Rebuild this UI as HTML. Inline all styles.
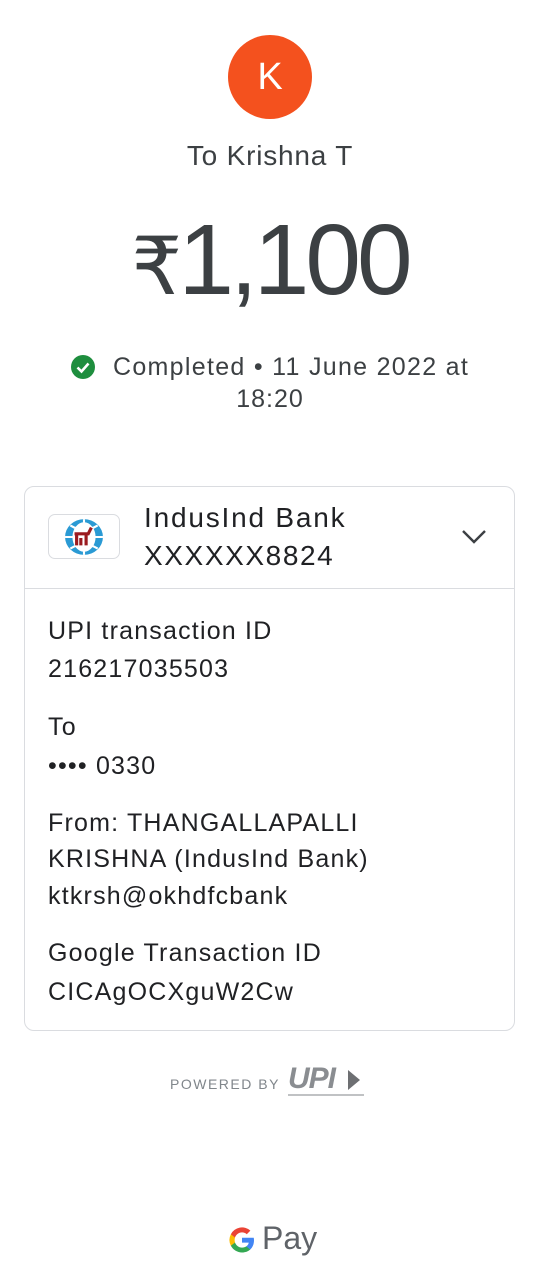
<!DOCTYPE html>
<html><head><meta charset="utf-8"><style>
*{margin:0;padding:0;box-sizing:border-box}
body{width:540px;height:1282px;background:#fff;font-family:"Liberation Sans",sans-serif;color:#202124;position:relative;overflow:hidden}
.a{position:absolute}
.t{font-size:25px;line-height:36px;letter-spacing:1.2px}
</style></head><body>
<div class="a" style="left:228px;top:35px;width:84px;height:84px;border-radius:50%;background:#f4511e;color:#fff;font-size:38px;text-align:center;line-height:84px">K</div>
<div class="a" style="left:0;width:540px;top:140px;text-align:center;font-size:28px;color:#3c4043;letter-spacing:0.8px">To Krishna T</div>
<div class="a" style="left:0;width:540px;top:200px;text-align:center;font-size:100px;color:#3c4043;line-height:120px;letter-spacing:-4px"><span style="font-size:80px">₹</span>1,100</div>
<svg class="a" style="left:70px;top:354px" width="26" height="26" viewBox="0 0 26 26"><circle cx="13" cy="13" r="12" fill="#1e8e3e"/><path d="M7.5 13.5l4 4 7-8" stroke="#fff" stroke-width="2.6" fill="none"/></svg>
<div class="a" style="left:113px;top:352px;font-size:25px;color:#3c4043;line-height:30px;letter-spacing:1.3px">Completed • 11 June 2022 at</div>
<div class="a" style="left:0;width:540px;top:384px;text-align:center;font-size:25px;color:#3c4043;line-height:30px;letter-spacing:1px">18:20</div>
<div class="a" style="left:24px;top:486px;width:491px;height:545px;border:1px solid #dadce0;border-radius:10px"></div>
<div class="a" style="left:24px;top:588px;width:491px;height:1px;background:#dadce0"></div>
<div class="a" style="left:48px;top:514px;width:72px;height:45px;border:1px solid #dadce0;border-radius:7px"></div>
<svg class="a" style="left:62px;top:517px" width="44" height="40" viewBox="0 0 40 38"><ellipse cx="20" cy="19" rx="18" ry="17" fill="#2a9ad4"/><path d="M2 19h36M20 2v34M7 8q13 8 26 0M7 30q13-8 26 0" stroke="#fff" stroke-width="2" fill="none"/><ellipse cx="20" cy="19" rx="11" ry="14" fill="#fff"/><path d="M11 16h13l3-6M13 16v11M22 16v11M17 20v7" stroke="#9b1b20" stroke-width="3" fill="none"/></svg>
<div class="a" style="left:144px;top:500px;font-size:28px;line-height:36px;letter-spacing:1.8px">IndusInd Bank</div>
<div class="a" style="left:144px;top:538px;font-size:28px;line-height:36px;letter-spacing:1.6px">XXXXXX8824</div>
<svg class="a" style="left:461px;top:528px" width="26" height="18"><path d="M2 3l11 11 11-11" stroke="#3c4043" stroke-width="2.4" fill="none"/></svg>
<div class="a t" style="left:48px;top:613px">UPI transaction ID</div>
<div class="a t" style="left:48px;top:651px">216217035503</div>
<div class="a t" style="left:48px;top:709px">To</div>
<div class="a t" style="left:48px;top:748px">•••• 0330</div>
<div class="a t" style="left:48px;top:805px">From: THANGALLAPALLI</div>
<div class="a t" style="left:48px;top:841px">KRISHNA (IndusInd Bank)</div>
<div class="a t" style="left:48px;top:878px">ktkrsh@okhdfcbank</div>
<div class="a t" style="left:48px;top:935px">Google Transaction ID</div>
<div class="a t" style="left:48px;top:974px">CICAgOCXguW2Cw</div>
<div class="a" style="left:170px;top:1076px;font-size:14px;letter-spacing:1.5px;color:#80868b">POWERED BY</div>
<div class="a" style="left:288px;top:1064px;font-size:30px;font-style:italic;font-weight:bold;color:#8a8d91;letter-spacing:-1px;line-height:30px">UPI</div>
<svg class="a" style="left:346px;top:1070px" width="18" height="20"><path d="M2 0l12 10-12 10z" fill="#6d6f72"/></svg>
<div class="a" style="left:288px;top:1094px;width:76px;height:2px;background:#c0c2c4"></div>
<svg class="a" style="left:227px;top:1225px" width="30" height="30" viewBox="0 0 24 24"><path d="M21.6 12.2c0-.7-.1-1.4-.2-2H12v3.9h5.4a4.6 4.6 0 0 1-2 3v2.5h3.2c1.900-1.7 3-4.300 3-7.4z" fill="#4285f4"/><path d="M12 22c2.7 0 5-.9 6.6-2.4l-3.2-2.500c-.9.6-2 1-3.400 1-2.600 0-4.800-1.800-5.600-4.100H3.1v2.600A10 10 0 0 0 12 22z" fill="#34a853"/><path d="M6.4 14c-.2-.6-.3-1.300-.3-2s.1-1.400.3-2V7.4H3.1a10 10 0 0 0 0 9.2z" fill="#fbbc04"/><path d="M12 5.9c1.5 0 2.800.5 3.800 1.500l2.900-2.900A10 10 0 0 0 3.1 7.4L6.4 10c.8-2.300 3-4.100 5.600-4.100z" fill="#ea4335"/></svg>
<div class="a" style="left:262px;top:1220px;font-size:32px;color:#5f6368">Pay</div>
</body></html>
